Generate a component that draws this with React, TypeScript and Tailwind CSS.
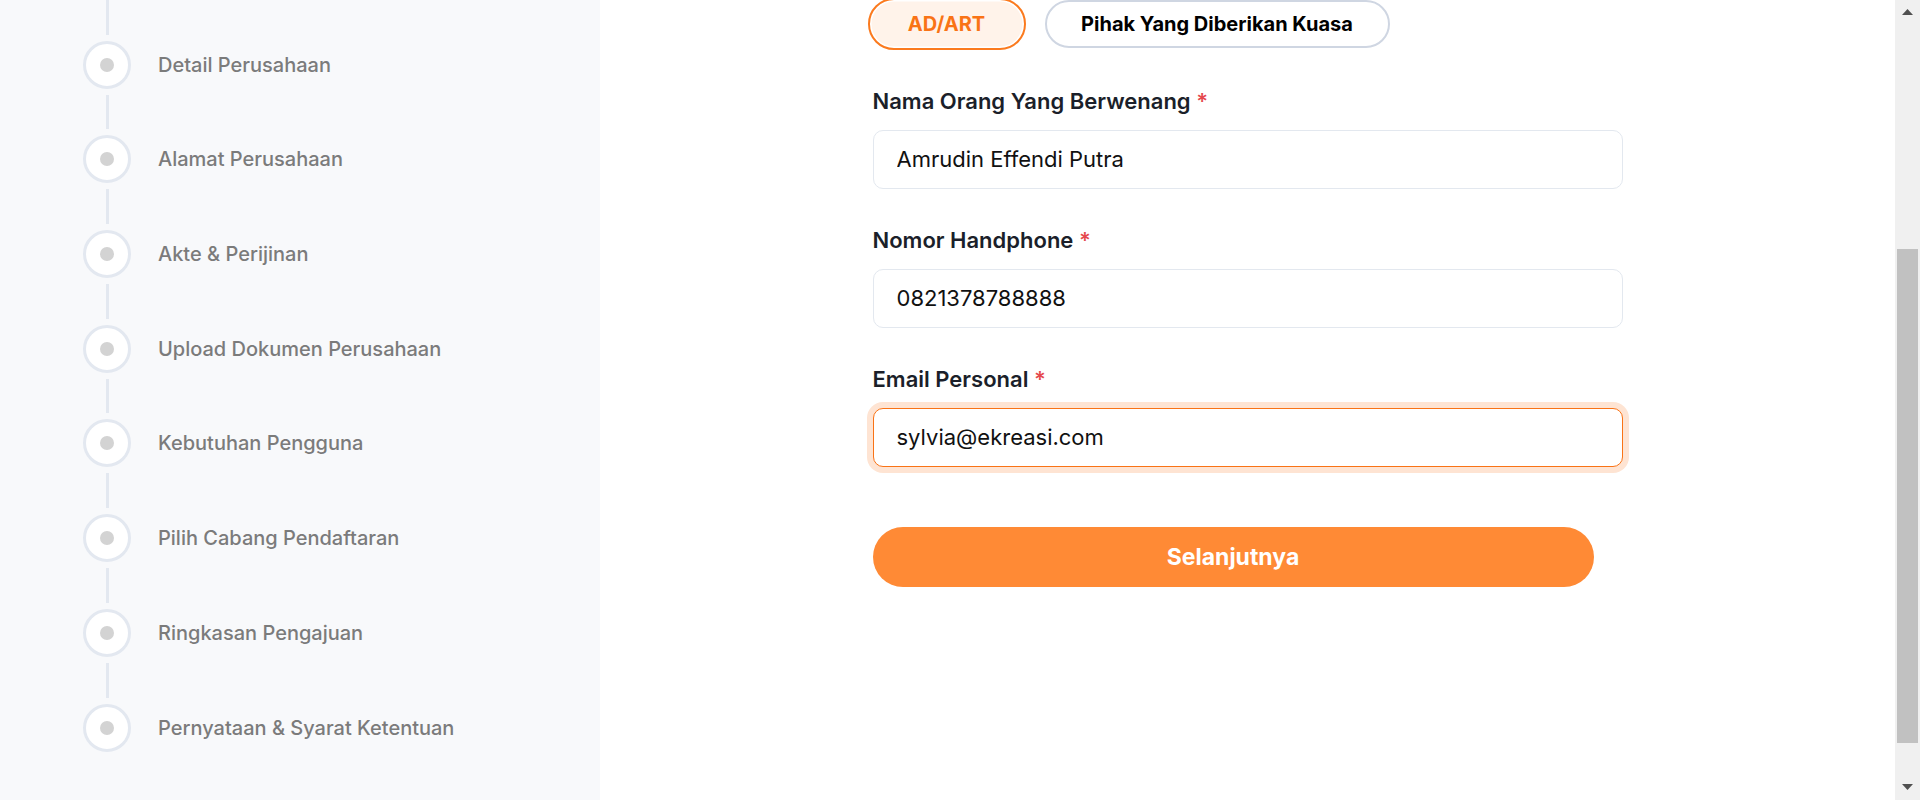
import React from "react";

const steps = [
  "Detail Perusahaan",
  "Alamat Perusahaan",
  "Akte & Perijinan",
  "Upload Dokumen Perusahaan",
  "Kebutuhan Pengguna",
  "Pilih Cabang Pendaftaran",
  "Ringkasan Pengajuan",
  "Pernyataan & Syarat Ketentuan",
];

type Field = {
  label: string;
  value: string;
  focused?: boolean;
};

const fields: Field[] = [
  { label: "Nama Orang Yang Berwenang", value: "Amrudin Effendi Putra" },
  { label: "Nomor Handphone", value: "0821378788888" },
  { label: "Email Personal", value: "sylvia@ekreasi.com", focused: true },
];

const Sidebar = () => {
  return (
    <aside className="w-[600px] shrink-0 bg-[#f8f9fb] pl-[83px]">
      <ul className="flex flex-col">
        {steps.map((step) => (
          <li key={step} className="flex flex-col">
            <div className="flex w-[48px] justify-center">
              <div className="h-[34.7px] w-[3px] bg-[#e3e8f0]"></div>
            </div>
            <div className="my-[6px] flex items-center">
              <div className="flex h-[48px] w-[48px] items-center justify-center rounded-full border-[3px] border-[#e3e8f0] bg-white">
                <div className="h-[14px] w-[14px] rounded-full bg-[#d3d3d3]"></div>
              </div>
              <span className="ml-[27px] text-[20px] font-medium text-[#7b7b7b]">{step}</span>
            </div>
          </li>
        ))}
      </ul>
    </aside>
  );
};

const FormField = ({ field }: { field: Field }) => {
  return (
    <div className="flex flex-col">
      <label className="text-[22px] leading-[28px] font-semibold text-[#1b1f2a]">
        {field.label} <span className="text-[#e5484d]">*</span>
      </label>
      <div
        className={
          field.focused
            ? "mt-[15px] flex h-[59px] items-center rounded-[10px] border border-[#f97316] bg-white px-[23px] ring-[6px] ring-[#fee4d3]"
            : "mt-[15px] flex h-[59px] items-center rounded-[10px] border border-[#e3e8ef] bg-white px-[23px]"
        }
      >
        <input
          readOnly
          value={field.value}
          className="w-full bg-transparent text-[22px] text-[#111111] outline-none"
        />
      </div>
    </div>
  );
};

const Scrollbar = () => {
  return (
    <div className="flex w-[25px] shrink-0 flex-col bg-[#f0f0f0]">
      <div className="flex h-[25px] items-start justify-center pt-[9px]">
        <svg width="11" height="6" viewBox="0 0 11 6">
          <path d="M0 6 L5.5 0 L11 6 Z" fill="#505050" />
        </svg>
      </div>
      <div className="flex flex-1 flex-col px-[2px]">
        <div className="mt-[224px] h-[494px] bg-[#c1c1c1]"></div>
      </div>
      <div className="flex h-[25px] items-end justify-center pb-[10px]">
        <svg width="11" height="6" viewBox="0 0 11 6">
          <path d="M0 0 L11 0 L5.5 6 Z" fill="#505050" />
        </svg>
      </div>
    </div>
  );
};

export default function App() {
  return (
    <div className="flex h-[800px] w-full overflow-hidden bg-white font-['Inter',sans-serif]">
      <Sidebar />
      <main className="flex-1">
        <div className="mx-auto w-[750px]">
          <div className="flex h-[48px] items-center gap-[19px]">
            <button className="-ml-[5px] h-[52px] w-[158px] shrink-0 rounded-full border-2 border-[#fb7a1e] bg-[#fff3ea] text-[20px] font-bold text-[#f97316] shadow-[inset_0_0_0_1.5px_#ffffff]">
              AD/ART
            </button>
            <button className="h-[48px] w-[345px] shrink-0 rounded-full border-2 border-[#cfd6e2] bg-white text-[20px] font-bold text-black">
              Pihak Yang Diberikan Kuasa
            </button>
          </div>
          <form className="mt-[39px] flex flex-col gap-[37px]">
            {fields.map((field) => (
              <FormField key={field.label} field={field} />
            ))}
          </form>
          <button className="mt-[60px] h-[60px] w-[721px] rounded-full bg-[#ff8a35] text-[23px] font-bold text-white">
            Selanjutnya
          </button>
        </div>
      </main>
      <Scrollbar />
    </div>
  );
}
